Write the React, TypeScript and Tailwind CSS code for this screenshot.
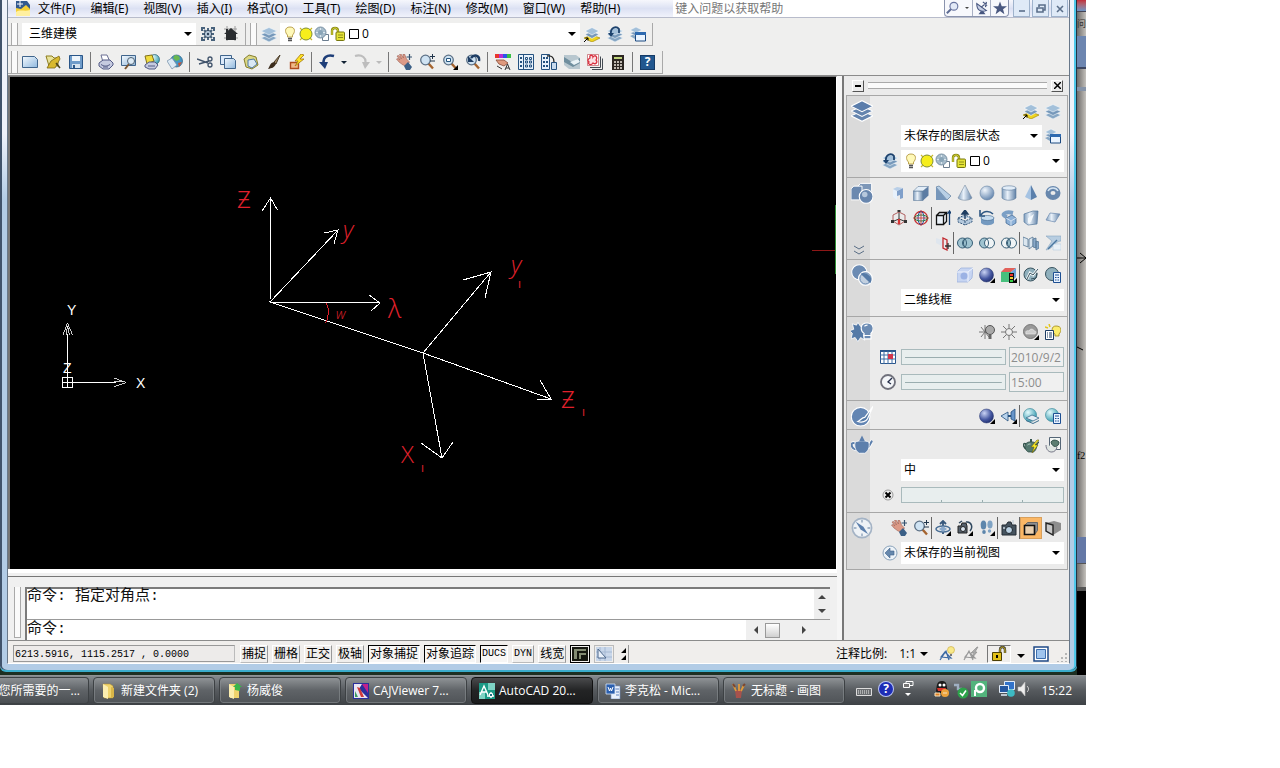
import type { ReactNode } from "react";
import { clsx } from "clsx";

const LAYERS = (
  <>
    <path d="M0 12l8-3.500 8 3.500-8 4z" fill="#86a6c4" stroke="#f4f8fc" strokeWidth=".6" />
    <path d="M0 8.500l8-3.500 8 3.500-8 4z" fill="#7698ba" stroke="#f4f8fc" strokeWidth=".6" />
    <path d="M0 5l8-3.500 8 3.500-8 4z" fill="#a3c0da" stroke="#f4f8fc" strokeWidth=".6" />
  </>
);

const FLYOUT = <path d="M16 11v5h-5z" fill="#000" />;

const LENS = (
  <>
    <path d="M9.500 9.500l4.500 5" stroke="#a5642f" strokeWidth="2.400" />
    <circle cx="6.500" cy="6" r="4.800" fill="#cfe3f3" stroke="#5d7186" strokeWidth="1.300" />
  </>
);

const HAND = (
  <>
    <path d="M1 2l1.500-.500 3 3.500-2-4.500 1.500-.500 2.500 4-.500-4 1.500 0 2 5 3 3-3 4-3.500-1-4-3-2.500-3 1.500-.500 2 1.500z" fill="#dc9a87" stroke="#9c6255" strokeWidth=".6" />
    <path d="M8 12l4-4 4 5-2 3h-4z" fill="#3b5f86" />
    <path d="M13.500 0v6M10.500 3h6" stroke="#34506e" strokeWidth="1.200" />
  </>
);

const SPHERE = <circle cx="8" cy="8" r="7" fill="url(#sphere)" stroke="#6583a5" strokeWidth=".6" />;
const DARK_SPHERE = <circle cx="7.500" cy="8" r="7" fill="url(#navy)" stroke="#26366f" strokeWidth=".5" />;
const GLOBE = <circle cx="7" cy="7" r="6.500" fill="url(#teal)" stroke="#2c7f92" strokeWidth=".6" />;
const NOTE = (
  <>
    <path d="M8.500 5.500h7v10h-7z" fill="#e9f3ff" stroke="#1d4f93" />
    <path d="M10 8h4M10 10.500h1.500M12.500 10.500h1.500M10 13h1.500M12.500 13h1.500" stroke="#1d4f93" />
  </>
);
const TEAPOT = (
  <>
    <path d="M3 7c-4-2-3 4 1 5M12 11c2 0 1-5 4-6" fill="none" stroke="#35554e" strokeWidth="1.500" />
    <path d="M2.500 7c2-3 9-3 11 0 1 3-1 7-3 8h-5c-3-1-4-5-3-8z" fill="#54786f" stroke="#24433c" strokeWidth=".7" />
    <path d="M7 2h2v3h-2z" fill="#35554e" />
    <path d="M4.500 8c1-1 2-1 3-1" fill="none" stroke="#b6d4c8" />
  </>
);

const GLYPHS: Record<string, ReactNode> = {
  app: (
    <>
      <path d="M1 0h11l3 4v10h-14z" fill="#32598f" />
      <path d="M1 7l5 1 5-4 4 4v7h-14z" fill="#f5cf35" />
      <path d="M1 11c4-3 9 0 14-2v6h-14z" fill="#fff0a0" />
      <path d="M5 0v6M2 3h6" stroke="#fff" />
    </>
  ),
  layers: LAYERS,
  layersCurrent: (
    <>
      <path d="M0 12l8-3 8 3-8 4z" fill="#efd51f" stroke="#a68b0a" strokeWidth=".7" />
      <path d="M1 8.500l7-3.500 7 3.500-7 4z" fill="#7698ba" stroke="#fff" strokeWidth=".6" />
      <path d="M1 5l7-3.500 7 3.500-7 4z" fill="#a3c0da" stroke="#fff" strokeWidth=".6" />
      <path d="M0 16l4-4M1.500 12h2.500v2.500" stroke="#000" fill="none" />
    </>
  ),
  layersBack: (
    <>
      {LAYERS}
      <path d="M4 8c-1-6 5-9 8-5v4" fill="none" stroke="#1d426d" strokeWidth="1.800" />
      <path d="M1 7h6l-3 4z" fill="#1d426d" />
    </>
  ),
  layersState: (
    <>
      <path d="M0 10l5-2 4 2-4 3z" fill="#86a6c4" />
      <path d="M0 7l6-2 6 2-6 3z" fill="#7698ba" stroke="#fff" strokeWidth=".5" />
      <path d="M0 4l6-3 6 3-6 3z" fill="#a3c0da" stroke="#fff" strokeWidth=".5" />
      <path d="M5.500 6.500h10v8.500h-10z" fill="#eaf4ff" stroke="#1c4a80" />
      <path d="M5 6h11v3h-11z" fill="#2e6ab0" />
    </>
  ),
  gear: (
    <>
      <path d="M1 1h4v2h-2v2h-2zM11 1h4v4h-2v-2h-2zM1 11h2v2h2v2h-4zM13 11h2v4h-4v-2h2z" fill="#47617b" />
      <path d="M8 2v12M2 8h12M4 4l8 8M12 4l-8 8" stroke="#4b657f" strokeWidth="2" />
      <circle cx="8" cy="8" r="3.600" fill="#b9cbdc" stroke="#33495f" />
      <circle cx="8" cy="8" r="1.200" fill="#2b3f54" />
    </>
  ),
  house: (
    <>
      <path d="M1 3h13M1 12h14M4 0v15M12 0v15" stroke="#9a9a9a" />
      <path d="M8 2l7 6h-2v6h-10v-6h-2z" fill="#2a2d30" />
      <path d="M3 3h2v3h-2z" fill="#2a2d30" />
    </>
  ),
  bulb: (
    <>
      <path d="M8 1c6 0 5 6 2.500 8v2h-5v-2c-2.500-2-3.500-8 2.500-8z" fill="#fff9b8" stroke="#b59a45" strokeWidth=".9" />
      <path d="M6 12.500h4M6 14.500h4" stroke="#555" strokeWidth="1.300" />
    </>
  ),
  sun: (
    <>
      <path d="M2 2l12 12M14 2l-12 12" stroke="#c9b92a" strokeWidth="1.200" />
      <circle cx="8" cy="8" r="6" fill="#f6ee1c" stroke="#7f8d3a" />
    </>
  ),
  sunViewport: (
    <>
      <path d="M8.500 8.500h6v6h-6z" fill="#fff" stroke="#6b7d8f" />
      <circle cx="6.500" cy="6.500" r="5.500" fill="#a7bccb" stroke="#7991a4" />
      <path d="M6.500 2v9M2 6.500h9" stroke="#dbe7ef" />
      <circle cx="6.500" cy="6.500" r="2.500" fill="#8aa5b8" />
    </>
  ),
  unlock: (
    <>
      <path d="M2 9v-4c0-4 6-4 6 0v3" fill="none" stroke="#8a8a14" strokeWidth="2.400" />
      <path d="M2 9v-4c0-4 6-4 6 0v3" fill="none" stroke="#d6d53a" />
      <rect x="6" y="6" width="8.500" height="8.500" rx="1" fill="#e4e337" stroke="#77770f" />
      <path d="M8 9h5M8 11.500h5" stroke="#8f8f19" />
    </>
  ),
  swatch: <path d="M3.500 3.500h9v9h-9z" fill="#fff" stroke="#000" />,
  newFile: <path d="M.500 2.500h12l3 3v8h-15z" fill="url(#paper)" stroke="#40658c" />,
  openFile: (
    <>
      <path d="M1 2h6l2 2h4v8h-9z" fill="#e8e39a" stroke="#8d7d1e" />
      <path d="M6 7l8-5 1 3-5 9-8 0z" fill="#d8b92e" stroke="#7d6a16" strokeWidth=".8" />
      <path d="M11 9l4 5" stroke="#4c4618" strokeWidth="1.500" />
    </>
  ),
  save: (
    <>
      <path d="M1.500 1.500h13v13h-13z" fill="#6f9cca" stroke="#2a5688" />
      <path d="M4 2h8v5h-8z" fill="#eef5fb" />
      <path d="M4 10h8v4h-8z" fill="#d5e3f0" />
      <path d="M5 11h2v3h-2z" fill="#2a5688" />
    </>
  ),
  print: (
    <>
      <path d="M5 8l-2-7h6l3 7z" fill="#fff" stroke="#6a6f93" />
      <path d="M1 9l4-3h7l3 3v2l-4 4h-6l-4-3z" fill="#c6cbe0" stroke="#535a85" />
      <path d="M3 10.500c3 2 6 2 9 0M5 13h5" fill="none" stroke="#535a85" />
    </>
  ),
  preview: (
    <>
      <path d="M.500 1.500h14v10h-14z" fill="url(#paper)" stroke="#40658c" />
      <path d="M8 10l-4 5" stroke="#7a5633" strokeWidth="2" />
      <circle cx="10" cy="7" r="3.500" fill="#dceaf5" stroke="#4d5f70" />
    </>
  ),
  publish: (
    <>
      <circle cx="10.500" cy="5.500" r="5" fill="url(#teal)" stroke="#2b6074" strokeWidth=".7" />
      <path d="M1 2l7-1 2 6-7 3z" fill="#f0dc3d" stroke="#80701c" />
      <path d="M1 11l4-3h6l3 3-3 4h-6l-4-2z" fill="#c6cbe0" stroke="#535a85" />
      <path d="M4 12h7" stroke="#535a85" />
    </>
  ),
  globe: (
    <>
      <circle cx="9.500" cy="7" r="6" fill="#4595c4" stroke="#2a5f80" strokeWidth=".7" />
      <path d="M8 1c4 0 6 3 4 5l-3 1-3-3z" fill="#6ab74f" />
      <path d="M11 9l4-1-3 5z" fill="#c4563b" />
      <path d="M0 7l5-3 5 7-5 4z" fill="#dce9f4" stroke="#6f8aa3" strokeWidth=".7" />
    </>
  ),
  cut: (
    <>
      <path d="M0 5l11 4M2 10l10-3" stroke="#40536b" strokeWidth="1.400" />
      <circle cx="13" cy="5" r="2" fill="none" stroke="#40536b" strokeWidth="1.300" />
      <circle cx="13" cy="11" r="2" fill="none" stroke="#40536b" strokeWidth="1.300" />
    </>
  ),
  copy: (
    <>
      <path d="M.500 1.500h11v9h-11z" fill="#dceafa" stroke="#40658c" />
      <path d="M4.500 4.500h9l2 2v8h-11z" fill="url(#paper)" stroke="#40658c" />
    </>
  ),
  paste: (
    <>
      <path d="M1 5l5-4 7 2 2 8-6 4-6-2z" fill="#dcd884" stroke="#857e2d" />
      <path d="M5 6l6-1 3 5-5 4-4-2z" fill="#d9e8f5" stroke="#5079a2" />
    </>
  ),
  brush: (
    <>
      <path d="M14 1l-6 7 2 2z" fill="#9a8360" stroke="#4b3e2b" />
      <path d="M8 8l2 2c-2 4-4 4-8 5 2-3 2-6 6-7z" fill="#3c2d1e" />
    </>
  ),
  match: (
    <>
      <path d="M1.500 8.500h8v6h-8z" fill="#f0b98a" stroke="#b04c1e" strokeWidth="1.400" />
      <path d="M12 0l-6 7h3l-3 5 9-7h-4l4-4z" fill="#ffe326" stroke="#a3770b" strokeWidth=".8" />
    </>
  ),
  undo: (
    <>
      <path d="M15 2c-7-2-12 2-10 8" fill="none" stroke="#1e3e78" strokeWidth="2.600" />
      <path d="M0 8h9l-3 7z" fill="#1e3e78" />
    </>
  ),
  redo: (
    <>
      <path d="M1 2c7-2 12 2 10 8" fill="none" stroke="#bdbdbd" strokeWidth="2.200" />
      <path d="M16 8h-8l3 7z" fill="#bdbdbd" />
    </>
  ),
  pan: HAND,
  zoom: (
    <>
      {LENS}
      <path d="M13.500 0v5M11 2.500h5M11 7h5" stroke="#20344a" />
    </>
  ),
  zoomWindow: (
    <>
      {LENS}
      <path d="M4.500 4.500h4v3h-4z" fill="#fff" stroke="#23547d" />
      {FLYOUT}
    </>
  ),
  zoomPrev: (
    <>
      {LENS}
      <path d="M14 7c1-6-5-7-8-3" fill="none" stroke="#1d3c63" strokeWidth="2.400" />
      <path d="M3 2v6h6z" fill="#1d3c63" />
    </>
  ),
  properties: (
    <>
      <path d="M0 0h4v4h-4z" fill="#e8372c" />
      <path d="M4 0h4v4h-4z" fill="#b52ed4" />
      <path d="M8 0h4v4h-4z" fill="#2c56e8" />
      <path d="M12 0h4v4h-4z" fill="#38c045" />
      <path d="M1 6h8l4 3-4 3-5-2z" fill="#df9a7e" stroke="#884b38" strokeWidth=".8" />
      <path d="M2 12l5 3M10 16l2.500-6 2.500 6M11 14h3" stroke="#333" fill="none" />
    </>
  ),
  designCenter: (
    <>
      <path d="M.500 .500h15v15h-15z" fill="#e7f1fb" stroke="#24517f" />
      <path d="M5.500 1v14" stroke="#24517f" />
      <path d="M2 4h2M2 8h2M2 12h2" stroke="#24517f" strokeWidth="2" />
      <path d="M7.500 3.500h2v2h-2zM11.500 3.500h2v2h-2zM7.500 7h2v2h-2zM11.500 7h2v2h-2zM7.500 11h2v2h-2zM11.500 11h2v2h-2z" fill="none" stroke="#24517f" />
    </>
  ),
  toolPalettes: (
    <>
      <path d="M.500 .500h8v15h-8z" fill="#e7f1fb" stroke="#24517f" />
      <path d="M2 4h2M2 8h2M2 12h2M5 4h2M5 8h2M5 12h2" stroke="#24517f" strokeWidth="2" />
      <path d="M6 2c5-1 7 2 7 6" fill="none" stroke="#222" strokeWidth="1.300" />
      <path d="M10.500 8.500h5v7h-5z" fill="#c9dbed" stroke="#24517f" />
    </>
  ),
  sheetSet: (
    <>
      <path d="M0 1h12l4 3v11h-11l-5-4z" fill="#b8c7cf" />
      <path d="M0 3l8 5 8-4v5l-7 4-9-5z" fill="#6f8e9e" />
      <path d="M6 8l8-3 2 3-6 3z" fill="#e9f2f6" />
    </>
  ),
  markup: (
    <>
      <path d="M5 15.500h10.500v-11M3 13.500h10.500v-11" fill="none" stroke="#434a52" />
      <path d="M.500 .500h11v11h-11z" fill="#fff" stroke="#b73c46" strokeWidth=".6" />
      <path d="M3 4c-1-4 3-3 3-1 2-3 5 0 3 3 2 2 0 5-3 3-2 3-6 1-4-1-2-1-1-3 1-4z" fill="#f9dfe1" stroke="#d9303f" strokeWidth="1.300" />
    </>
  ),
  calc: (
    <>
      <path d="M2 1h12v15h-12z" fill="#2c2622" />
      <path d="M4 3h8v2h-8z" fill="#bfd37b" />
      <path d="M4 8h2M7 8h2M10 8h2M4 11h2M7 11h2M10 11h2M4 14h2M7 14h2M10 14h2" stroke="#efe9df" strokeWidth="1.600" />
    </>
  ),
  search: (
    <>
      <path d="M6 9l-5 5" stroke="#5d6b93" strokeWidth="2.400" />
      <circle cx="9" cy="6" r="4.500" fill="#e2e9f7" stroke="#6874a0" strokeWidth="1.300" />
    </>
  ),
  dish: (
    <>
      <path d="M4 15h8l-3-4h-2z" fill="#46557f" />
      <path d="M2 3c0 8 5 10 11 8z" fill="#c6cee4" stroke="#46557f" strokeWidth="1.200" />
      <path d="M7 7l4-3M9 1l5 4M13 1l-1 6" fill="none" stroke="#46557f" strokeWidth="1.400" />
    </>
  ),
  star: <path d="M8 .500l2 5.500h6l-4.500 3.500 1.500 5.500-5-3.500-5 3.500 1.500-5.500-4.500-3.500h6z" fill="#4a5880" />,
  polysolid: (
    <>
      <path d="M2 4l4 2v9l-4-3z" fill="#e8f1fb" />
      <path d="M6 6l6-3v10l-3 1v-4l-3 1z" fill="#7f9fca" />
      <path d="M2 4l4-2 6 1-6 3z" fill="#b9cfe8" />
    </>
  ),
  box: (
    <>
      <path d="M.500 6h9.500v9.500h-9.500z" fill="url(#steel)" stroke="#5f7c9c" strokeWidth=".6" />
      <path d="M.500 6l4.500-4.500h10.500l-5.500 4.500z" fill="#e4eef8" stroke="#5f7c9c" strokeWidth=".6" />
      <path d="M10 6l5.500-4.500v9l-5.500 5z" fill="#5c7ca3" />
    </>
  ),
  wedge: (
    <>
      <path d="M1 2l3-1 12 10-4 4z" fill="#b9d0e6" stroke="#5f7c9c" strokeWidth=".7" />
      <path d="M1 2v13h11z" fill="#7696ba" />
    </>
  ),
  cone: <path d="M8 0l7 13c-3 3-11 3-14 0z" fill="url(#steel)" stroke="#788da3" strokeWidth=".6" />,
  sphere: SPHERE,
  cylinder: (
    <>
      <path d="M1 3v10c3 3 11 3 14 0v-10z" fill="url(#steel)" stroke="#5f7c9c" strokeWidth=".6" />
      <ellipse cx="8" cy="3" rx="7" ry="2.200" fill="#e2edf8" stroke="#5f7c9c" strokeWidth=".6" />
    </>
  ),
  pyramid: (
    <>
      <path d="M8 0l-6 12 6 3z" fill="#a5c3e3" />
      <path d="M8 0l6 12-6 3z" fill="#5b80ac" />
    </>
  ),
  torus: (
    <>
      <ellipse cx="8" cy="8" rx="5" ry="4.500" fill="none" stroke="#6787ad" strokeWidth="5" />
      <path d="M3 6c2-4 8-4 10 0" fill="none" stroke="#d5e4f2" strokeWidth="1.500" />
    </>
  ),
  ucs: (
    <>
      <path d="M8 1v9M8 9l-5 2M8 9l5 2" fill="none" stroke="#333" />
      <path d="M2 5l6-3 6 3v6l-6 4-6-4z" fill="none" stroke="#b06060" />
      <path d="M8 9v5" stroke="#d63333" strokeWidth="2.400" />
      <path d="M6.500 0h3v2h-3zM0 10h3v3h-3zM13 10h3v3h-3z" fill="#333" />
    </>
  ),
  gizmo: (
    <>
      <circle cx="8" cy="8" r="6.500" fill="none" stroke="#c43030" strokeWidth="1.300" />
      <ellipse cx="8" cy="8" rx="3" ry="6.500" fill="none" stroke="#2647a0" />
      <ellipse cx="8" cy="8" rx="6.500" ry="3" fill="none" stroke="#287c3c" />
      <path d="M8 0v16M0 8h16" stroke="#c43030" strokeWidth=".8" />
    </>
  ),
  extrude: (
    <>
      <path d="M1.500 5.500h7v9h-7zM1.500 5.500l3-3h7l-3 3M11.500 2.500v9l-3 3" fill="#eaf1f8" stroke="#111" strokeWidth="1.300" />
      <path d="M14.500 15v-13M12.500 4l2-3 2 3" fill="none" stroke="#163f70" strokeWidth="1.300" />
    </>
  ),
  pressPull: (
    <>
      <path d="M1 8l7-3 7 3v4l-7 3-7-3zM1 8l7 3 7-3M8 11v4" fill="#b5c9dd" stroke="#375a7e" strokeDasharray="2 1" />
      <path d="M8 9v-7M5 4l3-4 3 4z" fill="#1e3d61" stroke="#1e3d61" strokeWidth="1.400" />
    </>
  ),
  revolve: (
    <>
      <path d="M2 8v5c3 3 10 3 13 0v-5z" fill="#7399c0" />
      <ellipse cx="8.500" cy="8" rx="6.500" ry="2.500" fill="#c6dcef" stroke="#41688f" strokeWidth=".6" />
      <path d="M2 5c3-5 9-4 12-1M1 0v6h5" fill="none" stroke="#2d5783" strokeWidth="1.600" />
    </>
  ),
  sweep: (
    <>
      <path d="M12 3c-8-2-13 2-6 4" fill="none" stroke="#7b9fc5" strokeWidth="4" />
      <path d="M5 8l6-3 4 3v5l-5 3-5-3z" fill="#8db1d8" stroke="#365f8c" strokeWidth=".7" />
      <path d="M5 8l5 3 5-3M10 11v5" fill="none" stroke="#dfeaf5" strokeWidth=".8" />
    </>
  ),
  loft: (
    <>
      <path d="M1 4l9-3 5 0-1 13-9 1-4-3z" fill="url(#steel)" stroke="#54789e" strokeWidth=".7" />
      <path d="M5 8l6-4-3 8-3 1z" fill="#f3f8fc" />
    </>
  ),
  plane: <path d="M5 3l10 1-5 8-9-2z" fill="url(#steel)" stroke="#6b8ab0" strokeWidth=".7" />,
  section: (
    <>
      <path d="M1 3l6 2v6l-6-3z" fill="#dfe6ee" />
      <path d="M8 3v10l4 2v-10z" fill="none" stroke="#c2292f" strokeWidth="1.300" />
      <path d="M10 11h6M13 8v6" stroke="#333" strokeWidth="1.300" />
    </>
  ),
  union: (
    <>
      <circle cx="5.500" cy="8" r="5" fill="#9fc3d0" stroke="#365d75" />
      <circle cx="10.500" cy="8" r="5" fill="#9fc3d0" stroke="#365d75" />
      <path d="M8 4c2 2 2 6 0 8-2-2-2-6 0-8z" fill="none" stroke="#365d75" />
    </>
  ),
  subtract: (
    <>
      <circle cx="5.500" cy="8" r="5" fill="#9fc3d0" stroke="#365d75" />
      <circle cx="10.500" cy="8" r="5" fill="#eef3f5" stroke="#365d75" />
      <path d="M8 4c2 2 2 6 0 8" fill="none" stroke="#365d75" />
    </>
  ),
  intersect: (
    <>
      <circle cx="5.500" cy="8" r="5" fill="#eef3f5" stroke="#365d75" />
      <circle cx="10.500" cy="8" r="5" fill="#eef3f5" stroke="#365d75" />
      <path d="M8 4c2 2 2 6 0 8-2-2-2-6 0-8z" fill="#9fc3d0" stroke="#365d75" />
    </>
  ),
  slice: (
    <>
      <path d="M0 2l5 2v8l-5-2zM6 4l4-2v9l-4 3z" fill="#dbe6ef" stroke="#577694" strokeWidth=".8" />
      <path d="M10 4l3-1v10l-3-1zM13 6l3 1v6l-3 2z" fill="#8aa9c8" stroke="#577694" strokeWidth=".8" />
    </>
  ),
  thicken: (
    <>
      <path d="M1 1h15v5c-6 0-8 8-15 9l6-9z" fill="#b7cde1" stroke="#88a5c0" strokeWidth=".6" />
      <path d="M8 9h8v6h-8z" fill="#eaf1f7" stroke="#b7cde1" strokeWidth=".6" />
      <path d="M3 14l9-9" stroke="#4a779f" strokeWidth="1.500" />
    </>
  ),
  xray: (
    <>
      <path d="M0 5l4-4h12l-1 10-4 4h-11z" fill="#c7d5f2" stroke="#a0b3dc" strokeWidth=".8" />
      <path d="M0 5h11v10M11 5l5-4" fill="none" stroke="#eff3fc" />
      <circle cx="7" cy="9" r="3.500" fill="#9bb2e4" />
    </>
  ),
  render: (
    <>
      {DARK_SPHERE}
      {FLYOUT}
    </>
  ),
  cubeRgb: (
    <>
      <path d="M0 5l4-4h11l-5 4z" fill="#e2615a" />
      <path d="M0 5h10v10h-10z" fill="#47c07d" />
      <path d="M10 5l5-4v9l-5 5z" fill="#6b9fd8" />
      <path d="M8 6h5v10h-5z" fill="#111" />
      <path d="M9 7h3v2h-3z" fill="#e33" />
      <path d="M9 10h3v2h-3z" fill="#ec3" />
      <path d="M9 13h3v2h-3z" fill="#3c4" />
      {FLYOUT}
    </>
  ),
  xraySphere: (
    <>
      <circle cx="7.500" cy="7.500" r="6.500" fill="#8fb0bd" stroke="#37525e" />
      <path d="M4 12l3-6 3 2 5-6" fill="none" stroke="#f8fbfc" strokeWidth="2.600" />
      <path d="M4 12l3-6 3 2 5-6M8 12l5-1 1-5" fill="none" stroke="#37525e" />
    </>
  ),
  styleManager: (
    <>
      <circle cx="7" cy="7" r="6.500" fill="#8fb0bd" stroke="#37525e" />
      {NOTE}
    </>
  ),
  sunLight: (
    <>
      <path d="M6 1v14M0 8h12M2 3l8 10M10 3l-8 10" stroke="#777" />
      <circle cx="11" cy="6" r="4.500" fill="#a9a9a9" stroke="#555" />
      <path d="M9.500 11h3v4h-3z" fill="#666" />
    </>
  ),
  sunOff: (
    <>
      <path d="M8 0v16M0 8h16M2 2l12 12M14 2l-12 12" stroke="#777" />
      <circle cx="8" cy="8" r="3.500" fill="#eee" stroke="#777" />
    </>
  ),
  sky: (
    <>
      <circle cx="7.500" cy="7.500" r="7" fill="#999" stroke="#777" />
      <path d="M3 10c-1-3 1-4 3-3 1-3 5-2 5 0 3 0 2 3 1 3z" fill="#ccc" stroke="#eee" strokeWidth=".6" />
      {FLYOUT}
    </>
  ),
  lightList: (
    <>
      <path d="M11 2c6 0 6 5 3 8v2h-4v-2c-4-2-4-8 1-8z" fill="#fbec6d" stroke="#9d8517" strokeWidth=".8" />
      <path d="M4 0l1 3M0 3l3 1" stroke="#e4c51b" strokeWidth="1.500" />
      <path d="M.500 6.500h8v9h-8z" fill="#fff" stroke="#1b3b63" />
      <path d="M2 9h1M4 9h3M2 11h1M4 11h3M2 13h1M4 13h3" stroke="#1b3b63" />
    </>
  ),
  calendar: (
    <>
      <path d="M.500 1.500h15v13h-15z" fill="#fff" stroke="#2a568c" />
      <path d="M0 2h16" stroke="#2a568c" strokeWidth="2" />
      <path d="M0 6h16M0 10h16M4 2v13M8 2v13M12 2v13" stroke="#3d6ca4" />
      <path d="M8 5h5v5h-5z" fill="#d2344a" />
    </>
  ),
  clock: (
    <>
      <circle cx="8" cy="8" r="7" fill="#f4f6f9" stroke="#70717c" strokeWidth="1.800" />
      <path d="M12 4l-4 4 3 2" fill="none" stroke="#222c48" strokeWidth="1.300" />
    </>
  ),
  mirror: (
    <>
      <path d="M14 1v12l-4-2v-7z" fill="#6895c9" stroke="#25517f" strokeWidth=".8" />
      <path d="M0 8l7-4v9z" fill="#b9d3ec" stroke="#25517f" strokeWidth=".8" />
      <path d="M7 8h3" stroke="#25517f" strokeWidth="2" />
      {FLYOUT}
    </>
  ),
  materials: (
    <>
      {GLOBE}
      <path d="M3 10l6-3 7 3-6 3z" fill="#e6eef5" stroke="#3b6d8d" strokeWidth=".8" />
      <path d="M3 12.500l7 3 6-3" fill="none" stroke="#3b6d8d" />
    </>
  ),
  materialNote: (
    <>
      {GLOBE}
      {NOTE}
    </>
  ),
  renderNow: (
    <>
      {TEAPOT}
      <path d="M14 3l-6 7h3l-2 6 6-8h-3l4-5z" fill="#f8ea28" stroke="#6c6310" strokeWidth=".6" />
    </>
  ),
  renderWindow: (
    <>
      <path d="M4.500 .500h11v12h-11z" fill="#f4f7f5" stroke="#567" />
      <path d="M1 8c0 9 10 9 11 2" fill="#dfe5e2" stroke="#778" />
      <path d="M6 5c2-3 6-2 8 0 0 6-7 6-8 0z" fill="#5c7e72" stroke="#35554e" />
    </>
  ),
  cancel: (
    <>
      <circle cx="8" cy="8" r="5" fill="#eee" stroke="#999" />
      <path d="M5.500 5.500l5 5M10.500 5.500l-5 5" stroke="#000" strokeWidth="2" />
    </>
  ),
  orbit: (
    <>
      <path d="M8 1v13M5 4l3-3 3 3" fill="none" stroke="#36577b" strokeWidth="1.800" />
      <ellipse cx="8" cy="9" rx="7" ry="3" fill="none" stroke="#4a6f96" strokeWidth="1.600" />
      <path d="M4 9l4-3 4 3-4 3z" fill="#8aa9cb" />
      {FLYOUT}
    </>
  ),
  swivel: (
    <>
      <path d="M1 6h3l1-3h4l1 3v7h-9z" fill="#55606c" stroke="#222" />
      <circle cx="6" cy="9" r="2.500" fill="#dbe5ef" stroke="#222" />
      <path d="M9 2c6-1 7 6 4 9M2 3l3-2" fill="none" stroke="#30485f" strokeWidth="1.500" />
      {FLYOUT}
    </>
  ),
  walk: (
    <>
      <ellipse cx="4.500" cy="5" rx="2.800" ry="4.500" fill="#5d86ac" />
      <ellipse cx="5" cy="12" rx="1.800" ry="2" fill="#5d86ac" />
      <ellipse cx="11" cy="4.500" rx="2.600" ry="4" fill="#7fa3c4" />
      <ellipse cx="10.500" cy="11" rx="1.700" ry="1.800" fill="#7fa3c4" />
      {FLYOUT}
    </>
  ),
  camera: (
    <>
      <path d="M1 5h4l2-3h3l1 3h4v10h-14z" fill="#45535f" stroke="#222b33" />
      <circle cx="8" cy="10" r="3.500" fill="#b9d0e2" stroke="#1c242c" />
      <path d="M12 0v4M2 8h2" stroke="#c9d4dd" strokeWidth="1.500" />
    </>
  ),
  parallel: (
    <>
      <path d="M1.500 5.500l3-3h10v8l-3 4" fill="#8f8f8f" stroke="#666" />
      <path d="M1.500 5.500h10v9h-10z" fill="#e9cfae" stroke="#111" strokeWidth="1.600" />
    </>
  ),
  perspective: (
    <>
      <path d="M1 3l8-2 7 2v7l-8 5z" fill="#8d8d8d" />
      <path d="M1 3l7 2v10l-7-4z" fill="#c8c8c8" stroke="#222" strokeWidth="1.400" />
    </>
  ),
  backView: (
    <>
      <circle cx="8" cy="8" r="7" fill="#edf3f8" stroke="#8ba3bb" />
      <path d="M3 8l5-5v3h4v4h-4v3z" fill="#6688ad" stroke="#3f628a" strokeWidth=".6" />
    </>
  ),
  railLayers: (
    <>
      <path d="M0 11.500l8-3.500 8 3.500-8 4z" fill="#6484ae" stroke="#fff" strokeWidth=".8" />
      <path d="M0 8l8-3.500 8 3.500-8 4z" fill="#6484ae" stroke="#fff" strokeWidth=".8" />
      <path d="M0 4.500l8-4 8 4-8 4z" fill="#5b7dab" stroke="#fff" strokeWidth=".8" />
    </>
  ),
  railShapes: (
    <>
      <path d="M5 3l2-2h8v6l-2 2h-8z" fill="#7d97b8" stroke="#fff" strokeWidth=".7" />
      <path d="M0 5l2-2h6v8l-2 2h-6z" fill="#6a88af" stroke="#fff" strokeWidth=".7" />
      <circle cx="11" cy="10.500" r="5" fill="#6886ae" stroke="#fff" strokeWidth=".8" />
      <circle cx="10" cy="9" r="2" fill="#b7c8dd" />
    </>
  ),
  railStyles: (
    <>
      <circle cx="6" cy="6" r="5.500" fill="#6b8bb3" stroke="#fff" strokeWidth=".8" />
      <circle cx="10.500" cy="10.500" r="5" fill="#c2d0e0" stroke="#fff" strokeWidth=".8" />
      <circle cx="10.500" cy="10.500" r="4" fill="none" stroke="#6b8bb3" strokeWidth=".7" />
      <path d="M7 7l7 7c3-4-3-9-7-7z" fill="#557aa7" />
    </>
  ),
  railLight: (
    <>
      <path d="M5 1l2 3 3-2-1 3 3 3-3 2 1 4-3-2-2 3-2-3-3 1 1-4-2-2 3-1-1-4 3 1z" fill="#557aa7" stroke="#fff" strokeWidth=".6" />
      <path d="M11.500 1.500c6 0 5 6 3 7.500v4h-5v-4c-3-2-3-7.500 2-7.500z" fill="#6b8bb3" stroke="#fff" strokeWidth=".8" />
      <path d="M9.500 10.500h5M10 4c0-1 2-1 2-1" fill="none" stroke="#fff" strokeWidth=".8" />
    </>
  ),
  railMaterials: (
    <>
      <circle cx="7" cy="8.500" r="6.800" fill="#6285b3" stroke="#fff" strokeWidth=".8" />
      <path d="M16 1l-6 8c-2 0-3 2-5 3 3 1 6 0 7-2z" fill="#557aa7" stroke="#fff" strokeWidth=".9" />
    </>
  ),
  railTeapot: (
    <>
      <path d="M3 7c-4-2-3 4 1 4M12 10c2-1 2-4 3.500-5" fill="none" stroke="#fff" strokeWidth="2.600" />
      <path d="M3 7c-4-2-3 4 1 4M12 10c2-1 2-4 3.500-5" fill="none" stroke="#5c7fac" strokeWidth="1.500" />
      <path d="M3 6c2-1.500 8-1.500 10 0 1 4-1 7-3 8h-4c-2-1-4-4-3-8z" fill="#5c7fac" stroke="#fff" strokeWidth=".6" />
      <path d="M6 5l2-4 2 4z" fill="#5c7fac" />
    </>
  ),
  railCompass: (
    <>
      <circle cx="8" cy="8" r="7" fill="#eef2f6" stroke="#a4b3c5" strokeWidth="1.200" />
      <path d="M8 2v2M8 12v2M2 8h2M12 8h2" stroke="#8fa3ba" />
      <path d="M3.500 3.500l5.500 3.500 3.500 5.500-5.500-3.500z" fill="#5c7fac" />
    </>
  ),
  model: (
    <>
      <path d="M0 1h16v14h-16z" fill="#15170f" />
      <path d="M2 3h12v2h-9v8h-3zM7 7h7v2h-5v4h-2z" fill="#838b72" />
    </>
  ),
  layout: (
    <>
      <path d="M0 1h16v14h-16z" fill="#c9d7ea" />
      <path d="M4 1v14M9 1v14M0 6h16M0 11h16" stroke="#a5b8d2" />
      <path d="M2 3v9h8z" fill="#eaf1fa" stroke="#4c678b" />
    </>
  ),
  annotate: (
    <>
      <path d="M1 14l6-9 3 9M2 11l10 1-6-6z" fill="none" stroke="#3c6aa3" strokeWidth="1.200" />
      <circle cx="12" cy="4" r="3.500" fill="#f8e98a" stroke="#c7a73a" strokeWidth=".6" />
      <path d="M11 8h2v2h-2z" fill="#777" />
    </>
  ),
  annotateAuto: (
    <>
      <path d="M1 14l5-9 4 9M2 11l10 1-6-6z" fill="none" stroke="#999" strokeWidth="1.200" />
      <path d="M14 1l-6 6h3l-2 5 5-6h-2l3-5z" fill="#aaa" stroke="#888" strokeWidth=".6" />
    </>
  ),
  goldLock: (
    <>
      <path d="M9 7v-3c0-4 5-4 5 0v3" fill="none" stroke="#333" strokeWidth="2.400" />
      <path d="M9 7v-3c0-4 5-4 5 0v3" fill="none" stroke="#dfc01c" />
      <path d="M1.500 6.500h9v8h-9z" fill="#e1be17" stroke="#4c3f04" />
      <path d="M6 9v3" stroke="#000" strokeWidth="2" />
    </>
  ),
  cleanScreen: (
    <>
      <path d="M1 1h14v14h-14z" fill="#fff" stroke="#1f4a86" strokeWidth="1.500" />
      <path d="M3.500 3.500h9v9h-9z" fill="#9fc4ee" stroke="#3d6eae" />
    </>
  ),
  folder: (
    <>
      <path d="M2 1h7l3 2v12l-9 0z" fill="#efd36c" stroke="#b8922a" strokeWidth=".5" />
      <path d="M2 1l5 3v12l-5-2z" fill="#fbeeb0" />
      <path d="M10 4l3 1v9l-3 1z" fill="#d8b548" />
    </>
  ),
  folderUp: (
    <>
      <path d="M2 1h7l3 2v12h-9z" fill="#efd36c" />
      <path d="M2 1l5 3v12l-5-2z" fill="#fbeeb0" />
      <path d="M8 7v-3h-2l4-4 5 4h-2v4z" fill="#38b54a" />
    </>
  ),
  caj: (
    <>
      <path d="M0 0h16v16h-16z" fill="#2a2f9c" />
      <path d="M1 1h8l-3 5 9 9h-14z" fill="#e9e6f3" />
      <path d="M9 1h6v9z" fill="#c3218c" />
      <path d="M4 4l3 1 4 9-3 0z" fill="#d03a3a" />
      <path d="M2 8l3 6h-3z" fill="#3c9a62" />
    </>
  ),
  cad: (
    <>
      <path d="M0 0h16v16h-16z" fill="#1b9a86" />
      <path d="M9 0h7v7h-7zM0 9h6v7h-6z" fill="#7ed3c4" />
      <path d="M1 12l4-9 4 9M2.500 9h5M8 13h7M12 9v6" stroke="#fff" strokeWidth="1.400" fill="none" />
      <path d="M10.500 10.500h3v3h-3z" fill="#1b6f86" stroke="#fff" />
    </>
  ),
  word: (
    <>
      <path d="M6 3h9v13h-9z" fill="#eaf1fb" stroke="#6f8fc4" strokeWidth=".6" />
      <path d="M9 6h5M11 9h3M11 12h3" stroke="#5d80bd" />
      <path d="M1 1h9v10h-9z" fill="#2b5fae" stroke="#d7e4f7" strokeWidth=".8" />
      <path d="M3 4l1.500 4 1-3 1 3 1.500-4" stroke="#fff" fill="none" />
    </>
  ),
  paint: (
    <>
      <path d="M4 7h7l-1 8h-5z" fill="#a7524c" />
      <path d="M5 8l-3-7M8 8v-7M10 8l3-6" stroke="#e09a3b" strokeWidth="1.800" />
      <path d="M2 1l2 3M12 3l2-2" stroke="#7b4630" strokeWidth="2" />
    </>
  ),
  keyboard: (
    <>
      <path d="M.500 5.500h15v7h-15z" fill="#6b6e71" stroke="#ddd" />
      <path d="M2 8h12M2 10h12" stroke="#eee" strokeDasharray="1 1" />
    </>
  ),
  restoreTray: (
    <>
      <path d="M6 1.500h7v4h-7z" fill="none" stroke="#fff" />
      <path d="M3.500 3.500h6v4h-6z" fill="#777" stroke="#fff" />
      <path d="M5 13h6l-3 3z" fill="#fff" />
    </>
  ),
  penguin: (
    <>
      <path d="M8 0c6 0 4 6 6 10-2 6-10 6-12 0 1-4 0-10 6-10z" fill="#191919" />
      <circle cx="6" cy="4" r="1.500" fill="#fff" />
      <circle cx="10" cy="4" r="1.500" fill="#fff" />
      <path d="M3 7h9l-1 3h-7z" fill="#d9362c" />
      <circle cx="11" cy="12" r="4" fill="#eda33c" />
      <path d="M1 12h5v3h-5zM9 12h4" stroke="#f7e4c0" fill="#e08227" />
    </>
  ),
  shield: (
    <>
      <path d="M1 2h4v4h4" fill="none" stroke="#9fb0c2" strokeWidth="2.400" />
      <circle cx="10" cy="10" r="5.500" fill="#2ca24a" />
      <path d="M7 10l2.500 2.500 3.500-5" stroke="#fff" strokeWidth="1.600" fill="none" />
    </>
  ),
  pps: (
    <>
      <path d="M0 0h16v16h-16z" fill="#53b37c" />
      <circle cx="9" cy="7" r="4" fill="none" stroke="#fff" strokeWidth="2.400" />
      <path d="M4 9v6" stroke="#fff" strokeWidth="2" />
    </>
  ),
  network: (
    <>
      <path d="M5.500 .500h10v8h-10z" fill="#3273c9" stroke="#e2ecf8" />
      <path d="M.500 4.500h9v7h-9z" fill="#2558a0" stroke="#e2ecf8" />
      <circle cx="12" cy="12" r="3.800" fill="#3dbac3" />
      <path d="M2 14h6" stroke="#e2ecf8" strokeWidth="1.500" />
    </>
  ),
  speaker: (
    <>
      <path d="M1 6h3l4-5v14l-4-5h-3z" fill="#eee" stroke="#bbb" strokeWidth=".6" />
      <path d="M10 5c2 2 2 4 0 6" fill="none" stroke="#ddd" />
    </>
  ),
};

function Glyph({ name, className = "size-4" }: { name: string; className?: string }) {
  return (
    <svg viewBox="0 0 16 16" className={clsx("shrink-0", className)} aria-hidden="true">
      {GLYPHS[name]}
    </svg>
  );
}

function IconButton({ name, label, wide, active }: { name: string; label: string; wide?: boolean; active?: boolean }) {
  return (
    <button
      type="button"
      aria-label={label}
      className={clsx(
        "flex h-[22px] shrink-0 items-center justify-center",
        wide ? "w-[23px]" : "w-[22px]",
        active && "bg-[#fbb765] ring-1 ring-[#d9a05c] ring-inset",
      )}
    >
      <Glyph name={name} />
    </button>
  );
}

function Caret({ className = "text-black" }: { className?: string }) {
  return (
    <svg viewBox="0 0 8 4" className={clsx("h-1 w-2 shrink-0", className)} aria-hidden="true">
      <path d="M0 0h8l-4 4z" fill="currentColor" />
    </svg>
  );
}

function Combo({ label, value, className = "pl-[3px]", children }: { label: string; value: string; className?: string; children?: ReactNode }) {
  return (
    <div className={clsx("relative flex h-[22px] items-center bg-white", className)}>
      {children}
      <select aria-label={label} className="h-full min-w-0 flex-1 appearance-none bg-transparent pr-4 text-xs text-black outline-none">
        <option>{value}</option>
      </select>
      <Caret className="pointer-events-none absolute right-1 text-black" />
    </div>
  );
}

function LayerFlags() {
  return (
    <div className="flex items-center">
      <Glyph name="bulb" />
      <Glyph name="sun" />
      <Glyph name="sunViewport" />
      <Glyph name="unlock" />
      <Glyph name="swatch" />
    </div>
  );
}

function Grip() {
  return <div className="h-[22px] w-[7px] shrink-0 border-x border-[#a9a9a9] bg-[#fafafa]" />;
}

function Divider() {
  return <div className="mx-[3px] h-5 w-px shrink-0 bg-[#777]" />;
}

const MENUS = ["文件(F)", "编辑(E)", "视图(V)", "插入(I)", "格式(O)", "工具(T)", "绘图(D)", "标注(N)", "修改(M)", "窗口(W)", "帮助(H)"];

function MenuBar() {
  return (
    <div className="flex h-[18px] items-center border-b border-[#b8bccb] bg-linear-to-b from-[#f6f7fc] via-[#dce1f3] to-[#f0f2fb]">
      <Glyph name="app" className="ml-[7px] size-4" />
      <nav className="ml-[7px] flex gap-[15px] font-['Noto_Sans','Noto_Sans_CJK_SC',sans-serif]">
        {MENUS.map((m) => (
          <button key={m} type="button" className="text-xs leading-4 whitespace-nowrap text-black">
            {m}
          </button>
        ))}
      </nav>
      <input
        aria-label="帮助搜索"
        placeholder="键入问题以获取帮助"
        className="ml-[53px] h-full min-w-0 flex-1 bg-white pl-0.5 text-xs outline-none placeholder:text-[#777]"
      />
      <div className="flex h-full items-center rounded-b border border-t-0 border-[#8a93ad] bg-[#f7f8fc]">
        <button type="button" aria-label="搜索" className="flex h-full w-4 items-center justify-center">
          <Glyph name="search" className="size-3.5" />
        </button>
        <button type="button" aria-label="搜索选项" className="flex h-full w-3 items-center justify-center border-r border-[#a9b0c4]">
          <svg viewBox="0 0 4 2" className="h-0.5 w-1">
            <path d="M0 0h4l-2 2z" fill="#444" />
          </svg>
        </button>
        <button type="button" aria-label="通讯中心" className="flex h-full w-[18px] items-center justify-center border-r border-[#a9b0c4]">
          <Glyph name="dish" className="size-3.5" />
        </button>
        <button type="button" aria-label="收藏夹" className="flex h-full w-[17px] items-center justify-center">
          <Glyph name="star" className="size-3.5" />
        </button>
      </div>
      <div className="mr-px ml-1 flex h-full gap-0.5">
        <WindowButton label="最小化" d="M4 10h6" />
        <WindowButton label="还原" d="M3 7h6v4h-6zM5 6v-2h6v5h-2" />
        <WindowButton label="关闭" d="M4 5l6 6M10 5l-6 6" />
      </div>
    </div>
  );
}

function WindowButton({ label, d }: { label: string; d: string }) {
  return (
    <button type="button" aria-label={label} className="flex h-full w-[17px] items-center justify-center border border-t-0 border-[#9fb3cc] bg-[#dfeaf7]">
      <svg viewBox="0 0 14 14" className="size-3.5">
        <path d={d} fill="none" stroke="#5b6f8a" strokeWidth="1.600" />
      </svg>
    </button>
  );
}

// "|" is a divider, "v" and "-" are the enabled and disabled history arrows
const STANDARD: [string, string][] = [
  ["newFile", "新建"], ["openFile", "打开"], ["save", "保存"], ["|", "a"],
  ["print", "打印"], ["preview", "打印预览"], ["publish", "发布"], ["globe", "三维 DWF"], ["|", "b"],
  ["cut", "剪切"], ["copy", "复制"], ["paste", "粘贴"], ["brush", "特性匹配"], ["match", "块编辑器"], ["|", "c"],
  ["undo", "放弃"], ["v", "放弃列表"], ["redo", "重做"], ["-", "重做列表"], ["|", "d"],
  ["pan", "实时平移"], ["zoom", "实时缩放"], ["zoomWindow", "窗口缩放"], ["zoomPrev", "缩放上一个"], ["|", "e"],
  ["properties", "特性"], ["designCenter", "设计中心"], ["toolPalettes", "工具选项板"], ["sheetSet", "图纸集"], ["markup", "标记集"], ["calc", "计算器"], ["|", "f"],
];

function Toolbars() {
  return (
    <div className="border-b border-[#8b8b8b] bg-[#efefee] pb-px">
      <div className="flex pt-[5px]">
        <div className="flex items-center border-r border-b border-[#a9a9a9] pr-[3px] pl-[3px]">
          <Grip />
          <Combo label="工作空间" value="三维建模" className="ml-1 w-[174px] pl-[7px]" />
          <IconButton wide name="gear" label="工作空间设置" />
          <IconButton wide name="house" label="我的工作空间" />
        </div>
        <div className="flex items-center border-r border-b border-[#a9a9a9] pr-[3px] pl-1">
          <Grip />
          <IconButton wide name="layers" label="图层特性管理器" />
          <Combo label="图层" value="0" className="w-[300px] pl-0.5">
            <LayerFlags />
          </Combo>
          <IconButton wide name="layersCurrent" label="置为当前" />
          <IconButton wide name="layersBack" label="上一个图层" />
          <IconButton wide name="layersState" label="图层状态" />
        </div>
      </div>
      <div className="flex pt-[5px]">
        <div className="flex items-center border-r border-b border-[#a9a9a9] pr-[3px] pl-[3px]">
          <Grip />
          {STANDARD.map(([name, label]) => {
            if (name === "|") return <Divider key={label} />;
            if (name === "v" || name === "-") {
              return (
                <button key={label} type="button" aria-label={label} className="flex h-[22px] w-3 items-center justify-center">
                  <svg viewBox="0 0 6 3" className="h-[3px] w-1.5">
                    <path d="M0 0h6l-3 3z" fill={name === "v" ? "#123" : "#bbb"} />
                  </svg>
                </button>
              );
            }
            return <IconButton wide key={name} name={name} label={label} />;
          })}
          <button type="button" className="flex h-[22px] w-[23px] items-center justify-center">
            <span className="flex size-[15px] items-center justify-center border border-[#153b66] bg-[#21578f] text-xs font-bold text-white">?</span>
          </button>
        </div>
      </div>
    </div>
  );
}

function Drawing() {
  return (
    <svg viewBox="10 77 826 492" width="826" height="492" className="block" shapeRendering="crispEdges" aria-label="坐标系">
      <g fill="none" stroke="#fff">
        <path d="M270.500 198v52L270 302M262 211l8.500-13 7 12" />
        <path d="M270 302l68-72M324 233l14-3-4 14" />
        <path d="M270 302l110 1M369 295l11 8-9 8" />
        <path d="M270 302L423 353L551 399M540 380l11 19h-14" />
        <path d="M423 353l68-81M463 280l28-8-6 26" />
        <path d="M423 353l19 105M421 443l21 15 11-16" />
      </g>
      <path d="M326 303q3 4 2 12t-3 8" fill="none" stroke="#e0202c" />
      <g fill="#e0202c" className="font-['Open_Sans','Noto_Sans',sans-serif] font-light">
        <text x="237" y="208" fontSize="24">Ƶ</text>
        <text x="343" y="238" fontSize="24" fontStyle="italic">y</text>
        <text x="388" y="318" fontSize="26">λ</text>
        <text x="336" y="319" fontSize="14" fontStyle="italic">w</text>
        <text x="511" y="273" fontSize="24" fontStyle="italic">y</text>
        <text x="561" y="408" fontSize="24">Ƶ</text>
        <text x="401" y="463" fontSize="24">X</text>
      </g>
      <g fill="#e0202c" className="font-['Open_Sans','Noto_Sans',sans-serif]" fontSize="12">
        <text x="518" y="288">ı</text>
        <text x="582" y="416">ı</text>
        <text x="421" y="472">ı</text>
      </g>
      <g fill="none" stroke="#fff">
        <path d="M62.500 377.500h10v10h-10zM62 382.500h54M67.500 388v-54" />
        <path d="M63 335l4.500-12 5 12M66 335l1.500-9 2 9M114 378l12 4.500-12 4M114 382l9-1" strokeWidth=".8" />
      </g>
      <g fill="#fff" className="font-['Liberation_Sans',sans-serif]" fontSize="14">
        <text x="67" y="315">Y</text>
        <text x="63" y="373">Z</text>
        <text x="136" y="388">X</text>
      </g>
      <path d="M812 250.500h24" stroke="#8d1717" />
      <path d="M835.500 205v69" stroke="#2f8f35" />
    </svg>
  );
}

function CommandLine() {
  return (
    <div className="flex h-[64px] border-t border-[#777] bg-[#f0f0f0] pt-2.5 pr-[7px] pl-1.5">
      <div className="mr-1 h-[51px] w-[7px] border-x border-b border-[#a9a9a9] bg-[#fafafa]" />
      <div className="flex min-w-0 flex-1 flex-col border-t-2 border-l-2 border-[#7b7b7b] bg-white font-['Liberation_Mono','Noto_Sans_CJK_SC',monospace] text-[15px] text-[#111]">
        <div className="flex h-8 items-start justify-between border-b border-[#999]">
          <output className="leading-[15px]">命令: 指定对角点:</output>
          <div className="flex h-full w-4 flex-col items-center justify-between bg-[#eee] py-1.5">
            <Caret className="rotate-180 text-[#444]" />
            <Caret className="text-[#444]" />
          </div>
        </div>
        <div className="flex h-5 items-center">
          <label htmlFor="command">命令:</label>
          <input id="command" className="h-full min-w-0 flex-1 outline-none" />
          <div className="flex h-full w-[68px] items-center justify-between bg-[#efefef] px-1.5">
            <Caret className="rotate-90 text-[#444]" />
            <div className="mr-4 h-[15px] w-[15px] border border-[#999] bg-linear-to-b from-white to-[#d0d0d0]" />
            <Caret className="-rotate-90 text-[#444]" />
          </div>
          <div className="h-full w-4 bg-[#efefef]" />
        </div>
      </div>
    </div>
  );
}

function Section({ rail, className = "pb-[5px]", more, children }: { rail: string; className?: string; more?: boolean; children: ReactNode }) {
  return (
    <section className="flex border-b border-[#a7a7a7]">
      <div className="flex w-[23px] shrink-0 flex-col items-center justify-between bg-[#dadada] pt-1">
        <Glyph name={rail} className="-mr-1.5 size-[22px]" />
        {more && (
          <svg viewBox="0 0 10 10" className="mb-1 size-2.5">
            <path d="M0 1l5 3 5-3M0 6l5 3 5-3" fill="none" stroke="#5a6f86" />
          </svg>
        )}
      </div>
      <div className={clsx("flex min-w-0 flex-1 flex-col gap-[3px] pt-1 pr-[3px] pl-2", className)}>{children}</div>
    </section>
  );
}

function IconRow({ names }: { names: string[] }) {
  return (
    <div className="flex h-[22px] items-center justify-end">
      {names.map((n, i) =>
        n === "|" ? (
          <div key={i} className="-mx-px h-[22px] w-0.5 shrink-0 border-l border-[#666]" />
        ) : (
          <IconButton key={i} name={n} label={n} active={n === "parallel"} />
        ),
      )}
    </div>
  );
}

function SliderRow({ icon, label, value }: { icon: string; label: string; value: string }) {
  return (
    <div className="flex h-[22px] items-center gap-[3px]">
      <div className="flex w-5 shrink-0 justify-center">
        <Glyph name={icon} />
      </div>
      <input
        type="range"
        disabled
        aria-label={label}
        className="h-4 min-w-0 flex-1 appearance-none border border-[#a9babc] bg-[#e8eeee] bg-[linear-gradient(#9aadaf,#9aadaf)] bg-[length:94%_1px] bg-center bg-no-repeat [&::-webkit-slider-thumb]:invisible"
      />
      <input aria-label={label} disabled defaultValue={value} className="h-5 w-[55px] border border-[#a9babc] bg-[#f0f0f0] pl-px text-xs text-[#8d8d8d]" />
    </div>
  );
}

function Dashboard() {
  return (
    <aside className="flex w-[227px] shrink-0 flex-col border-l-2 border-[#777] bg-[#ebebeb] pr-px pl-0.5">
      <div className="flex h-[19px] items-center gap-1 pr-[5px] pl-1.5">
        <button type="button" aria-label="最小化面板" className="flex h-3 w-3 items-center justify-center border border-t-white border-r-[#555] border-b-[#555] border-l-white">
          <span className="h-0.5 w-1.5 bg-black" />
        </button>
        <div className="h-[7px] flex-1 border-y border-[#aaa] bg-[#fbfbfb]" />
        <button type="button" aria-label="关闭面板" className="flex h-3 w-3 items-center justify-center border border-t-white border-r-[#555] border-b-[#555] border-l-white">
          <svg viewBox="0 0 7 7" className="size-[7px]">
            <path d="M0 0l7 7M7 0l-7 7" stroke="#000" strokeWidth="1.500" />
          </svg>
        </button>
      </div>
      <div className="border-x border-t border-[#a7a7a7]">
        <Section rail="railLayers">
          <IconRow names={["layersCurrent", "layers"]} />
          <div className="flex pl-[23px]">
            <Combo label="图层状态" value="未保存的图层状态" className="flex-1 pl-[3px]" />
            <IconButton name="layersState" label="图层状态管理器" />
          </div>
          <div className="flex">
            <div className="flex w-[23px] items-center justify-center">
              <Glyph name="layersBack" />
            </div>
            <Combo label="当前图层" value="0" className="flex-1 pl-0.5">
              <LayerFlags />
            </Combo>
          </div>
        </Section>
        <Section rail="railShapes" more>
          <IconRow names={["polysolid", "box", "wedge", "cone", "sphere", "cylinder", "pyramid", "torus"]} />
          <IconRow names={["ucs", "gizmo", "|", "extrude", "pressPull", "revolve", "sweep", "loft", "plane"]} />
          <IconRow names={["section", "|", "union", "subtract", "intersect", "|", "slice", "thicken"]} />
        </Section>
        <Section rail="railStyles">
          <IconRow names={["xray", "render", "cubeRgb", "|", "xraySphere", "styleManager"]} />
          <Combo label="视觉样式" value="二维线框" className="ml-[23px] pl-[3px]" />
        </Section>
        <Section rail="railLight" className="pb-[7px]">
          <IconRow names={["sunLight", "sunOff", "sky", "lightList"]} />
          <SliderRow icon="calendar" label="日期" value="2010/9/2" />
          <SliderRow icon="clock" label="时间" value="15:00" />
        </Section>
        <Section rail="railMaterials" className="pb-0.5">
          <IconRow names={["render", "mirror", "|", "materials", "materialNote"]} />
        </Section>
        <Section rail="railTeapot" className="pb-1.5">
          <IconRow names={["renderNow", "renderWindow"]} />
          <Combo label="渲染预设" value="中" className="ml-[23px] pl-[3px]" />
          <div className="flex h-[22px] items-center gap-[3px]">
            <button type="button" aria-label="取消渲染" className="flex w-5 justify-center">
              <Glyph name="cancel" />
            </button>
            <div className="grid h-4 flex-1 grid-cols-4 items-end border border-[#a9babc] bg-[#e8eeee]">
              <i className="h-0.5 border-r border-[#9aadaf]" />
              <i className="h-0.5 border-r border-[#9aadaf]" />
              <i className="h-0.5 border-r border-[#9aadaf]" />
            </div>
          </div>
        </Section>
        <Section rail="railCompass">
          <IconRow names={["pan", "zoom", "|", "orbit", "swivel", "walk", "|", "camera", "|", "parallel", "perspective"]} />
          <div className="flex">
            <div className="flex w-[23px] items-center justify-center">
              <Glyph name="backView" />
            </div>
            <Combo label="当前视图" value="未保存的当前视图" className="flex-1 pl-[3px]" />
          </div>
        </Section>
      </div>
    </aside>
  );
}

const TOGGLES: { label: string; on?: boolean }[] = [
  { label: "捕捉" },
  { label: "栅格" },
  { label: "正交" },
  { label: "极轴" },
  { label: "对象捕捉", on: true },
  { label: "对象追踪", on: true },
  { label: "DUCS", on: true },
  { label: "DYN" },
  { label: "线宽" },
];

function StatusBar() {
  return (
    <div className="flex h-[23px] items-center border-t border-[#8b8b8b] bg-[#f0eeec] pt-[3px] pr-0.5 pl-[5px] text-xs text-black">
      <output className="mr-[5px] h-[17px] w-[222px] border border-[#999] border-r-[#bbb] bg-[#edebea] pl-px font-['Liberation_Mono',monospace] text-[10px] leading-[17px] whitespace-pre">
        6213.5916, 1115.2517 , 0.0000
      </output>
      <div className="flex gap-1">
        {TOGGLES.map((t) => (
          <button
            key={t.label}
            type="button"
            aria-pressed={!!t.on}
            className={clsx(
              "h-[18px] border px-px leading-4 whitespace-nowrap",
              t.on ? "border-t-black border-r-white border-b-white border-l-black bg-[#f7f6f5]" : "border-t-white border-r-[#999] border-b-[#bbb] border-l-white",
              /^[A-Z]/.test(t.label) && "font-['Liberation_Mono',monospace] text-[10px]",
            )}
          >
            {t.label}
          </button>
        ))}
        <button type="button" aria-label="模型" className="h-[18px] w-5 border border-black">
          <Glyph name="model" className="mx-auto size-4" />
        </button>
        <button type="button" aria-label="布局" className="h-[18px] w-5 border border-[#bbb]">
          <Glyph name="layout" className="mx-auto size-4" />
        </button>
        <button type="button" aria-label="更多布局" className="flex h-[18px] w-[11px] items-center justify-center border-r border-[#999]">
          <svg viewBox="0 0 6 12" className="h-3 w-1.5">
            <path d="M6 0v5h-5zM6 7v5h-5z" />
          </svg>
        </button>
      </div>
      <div className="ml-auto flex items-center">
        <span>注释比例:</span>
        <button type="button" className="ml-3 flex items-center gap-1">
          1:1
          <Caret />
        </button>
        <button type="button" aria-label="注释可见性" className="ml-[11px]">
          <Glyph name="annotate" />
        </button>
        <button type="button" aria-label="自动添加比例" className="ml-2">
          <Glyph name="annotateAuto" />
        </button>
        <button type="button" aria-label="锁定工具栏" className="ml-2 flex h-[18px] w-6 items-center justify-center border border-t-[#777] border-r-white border-b-white border-l-[#777]">
          <Glyph name="goldLock" />
        </button>
        <button type="button" aria-label="状态栏菜单" className="mt-1 ml-1.5">
          <Caret />
        </button>
        <button type="button" aria-label="全屏显示" className="ml-2">
          <Glyph name="cleanScreen" />
        </button>
        <svg viewBox="0 0 10 10" className="mt-1.5 ml-2 size-2.5">
          <path d="M8 1h2v2h-2zM8 5h2v2h-2zM4 5h2v2h-2zM8 9h2v1h-2zM4 9h2v1h-2zM0 9h2v1h-2z" fill="#b5b5b5" />
        </svg>
      </div>
    </div>
  );
}

const TASKS = [
  { icon: "folder", title: "新建文件夹 (2)" },
  { icon: "folderUp", title: "杨威俊" },
  { icon: "caj", title: "CAJViewer 7..." },
  { icon: "cad", title: "AutoCAD 20...", active: true },
  { icon: "word", title: "李克松 - Mic..." },
  { icon: "paint", title: "无标题 - 画图" },
];

function Taskbar() {
  return (
    <footer className="flex h-[30px] border-t border-[#8e9294] bg-linear-to-b from-[#858a8e] via-[#565a5e] to-[#3e4246] py-px text-xs text-white">
      <div className="flex min-w-0 flex-1 gap-1">
        <button type="button" className="flex w-[89px] shrink-0 items-center justify-end rounded-r-sm border border-l-0 border-[#3d4144] bg-linear-to-b from-[#8b8f92] via-[#5f6367] to-[#4b4f53] pr-2 whitespace-nowrap">
          您所需要的一...
        </button>
        {TASKS.map((t) => (
          <button
            key={t.title}
            type="button"
            className={clsx(
              "flex min-w-0 flex-1 items-center gap-1 overflow-hidden rounded-sm border pl-[7px] whitespace-nowrap",
              t.active
                ? "border-[#111] bg-linear-to-b from-[#4a4b4d] via-[#232425] to-[#1b1c1d]"
                : "border-[#3d4144] bg-linear-to-b from-[#8f9396] via-[#5f6367] to-[#505458] ring-1 ring-[#8b8f92]/60 ring-inset",
            )}
          >
            <Glyph name={t.icon} />
            <span>{t.title}</span>
          </button>
        ))}
      </div>
      <div className="flex w-[241px] shrink-0 items-center pr-3.5 pl-[11px]">
        <Glyph name="keyboard" />
        <span className="mb-1 ml-[7px] flex size-3.5 items-center justify-center rounded-full bg-[#1d2db6] font-bold ring-1 ring-[#b9c4f5]">?</span>
        <Glyph name="restoreTray" className="mb-1.5 ml-[7px] size-4" />
        <Glyph name="penguin" className="mb-1 ml-[18px] size-4" />
        <Glyph name="shield" className="ml-[3px] size-4" />
        <Glyph name="pps" className="mb-1 ml-0.5 size-4" />
        <Glyph name="network" className="mb-1 ml-3 size-4" />
        <Glyph name="speaker" className="mb-1 ml-0.5 size-4" />
        <time className="ml-auto">15:22</time>
      </div>
    </footer>
  );
}

// sliver of the windows lying behind the main one
function Backdrop() {
  return (
    <div className="flex w-[9px] shrink-0 flex-col bg-linear-to-r from-[#6f6d6b] to-[#c4c1bc]">
      <div className="h-[11px] bg-linear-to-b from-[#c22a3a] to-[#6a94c4]" />
      <div className="h-[25px] border-t border-[#445] pt-1.5 text-[9px] leading-3 text-[#333]">问</div>
      <div className="h-[33px] border-b-2 border-[#3c4660] bg-[#6d86b0]" />
      <div className="h-[22px] border-b-4 border-[#8593a8]" />
      <svg viewBox="0 0 9 357" className="h-[357px] w-[9px] shrink-0">
        <path d="M0 167h9M3 162l6 5-6 5M0 256l6 3" stroke="#000" fill="none" />
      </svg>
      <div className="h-[89px] font-['Liberation_Serif',serif] text-[10px] text-black">f2</div>
      <div className="h-[26px] bg-[#6478a6]" />
      <div className="h-[28px] border-t border-b-4 border-[#555]" />
      <div className="flex-1 bg-black" />
    </div>
  );
}

export default function App() {
  return (
    <div className="min-h-screen bg-white pr-[194px] font-['Open_Sans','Noto_Sans_CJK_SC',sans-serif]">
      <svg className="absolute size-0" aria-hidden="true">
        <defs>
          <linearGradient id="paper" x1="0" y1="0" x2="1" y2="1">
            <stop offset="0" stopColor="#f5fafe" />
            <stop offset="1" stopColor="#8fb8de" />
          </linearGradient>
          <linearGradient id="steel">
            <stop offset="0" stopColor="#7f9dbd" />
            <stop offset=".400" stopColor="#eaf2fa" />
            <stop offset="1" stopColor="#5f80a6" />
          </linearGradient>
          <radialGradient id="sphere" cx=".35" cy=".3" r=".8">
            <stop offset="0" stopColor="#f0f6fc" />
            <stop offset="1" stopColor="#587ca8" />
          </radialGradient>
          <radialGradient id="navy" cx=".35" cy=".3" r=".8">
            <stop offset="0" stopColor="#c9d3f4" />
            <stop offset=".6" stopColor="#4456a0" />
            <stop offset="1" stopColor="#1b2866" />
          </radialGradient>
          <radialGradient id="teal" cx=".35" cy=".3" r=".8">
            <stop offset="0" stopColor="#e3fafc" />
            <stop offset="1" stopColor="#2792a8" />
          </radialGradient>
        </defs>
      </svg>
      <div className="flex">
        <div className="flex min-w-0 flex-1 flex-col bg-[#1d2f22] pb-[3px]">
          <div className="flex rounded-b-md border-b-2 border-[#3aaccb] bg-linear-to-b from-[#eef2fa] from-20% to-[#b2cce6] to-30% pr-[7px] pb-1.5 pl-[7px] shadow-[inset_-1px_0_0_#234,inset_-3px_0_0_#4fc8ea,inset_2px_0_0_#40536b]">
            <div className="min-w-0 flex-1 border-x border-b border-[#68788a] border-b-white">
              <MenuBar />
              <Toolbars />
              <div className="flex bg-[#f0f0f0]">
                <div className="min-w-0 flex-1">
                  <div className="overflow-hidden border-t border-r border-l-2 border-[#777] border-r-white bg-black">
                    <Drawing />
                  </div>
                  <div className="h-[7px] border-t-4 border-white" />
                  <CommandLine />
                </div>
                <div className="w-[5px] shrink-0 bg-[#f6f6f6]" />
                <Dashboard />
              </div>
              <StatusBar />
            </div>
          </div>
        </div>
        <Backdrop />
      </div>
      <Taskbar />
    </div>
  );
}
